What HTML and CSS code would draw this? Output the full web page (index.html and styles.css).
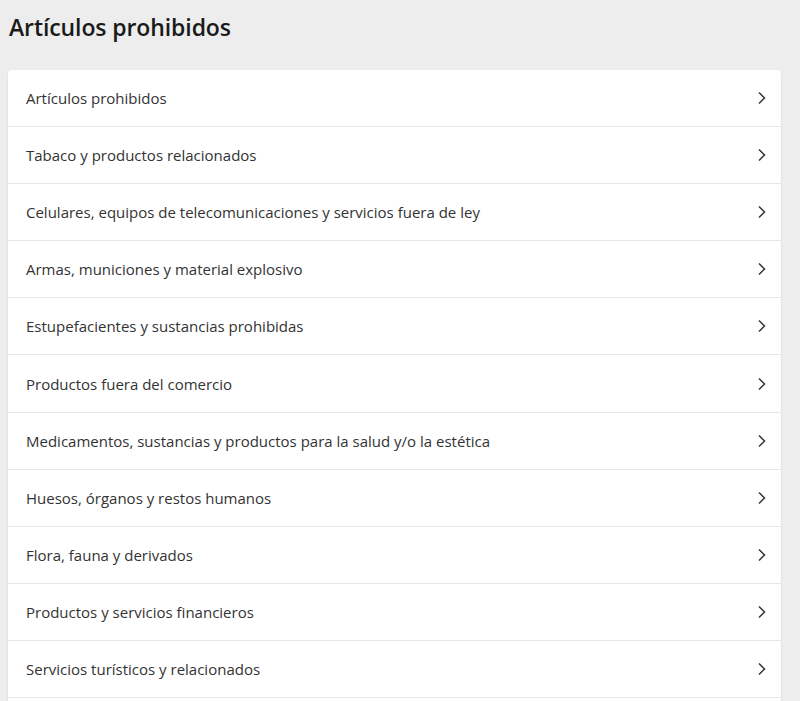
FILE: index.html
```html
<!DOCTYPE html>
<html lang="es">
<head>
    <meta charset="UTF-8">
    <meta name="viewport" content="width=device-width, initial-scale=1.0">
    <title>Artículos prohibidos</title>
    <link rel="stylesheet" href="styles.css">
</head>
<body>

<h1 class="title">Artículos prohibidos</h1>

<ul class="list">
    <li class="item"><a href="#">Artículos prohibidos<svg class="chevron" viewBox="0 0 10 14"><path d="M2 1.5 L7.5 7 L2 12.5"/></svg></a></li>
    <li class="item"><a href="#">Tabaco y productos relacionados<svg class="chevron" viewBox="0 0 10 14"><path d="M2 1.5 L7.5 7 L2 12.5"/></svg></a></li>
    <li class="item"><a href="#">Celulares, equipos de telecomunicaciones y servicios fuera de ley<svg class="chevron" viewBox="0 0 10 14"><path d="M2 1.5 L7.5 7 L2 12.5"/></svg></a></li>
    <li class="item"><a href="#">Armas, municiones y material explosivo<svg class="chevron" viewBox="0 0 10 14"><path d="M2 1.5 L7.5 7 L2 12.5"/></svg></a></li>
    <li class="item"><a href="#">Estupefacientes y sustancias prohibidas<svg class="chevron" viewBox="0 0 10 14"><path d="M2 1.5 L7.5 7 L2 12.5"/></svg></a></li>
    <li class="item"><a href="#">Productos fuera del comercio<svg class="chevron" viewBox="0 0 10 14"><path d="M2 1.5 L7.5 7 L2 12.5"/></svg></a></li>
    <li class="item"><a href="#">Medicamentos, sustancias y productos para la salud y/o la estética<svg class="chevron" viewBox="0 0 10 14"><path d="M2 1.5 L7.5 7 L2 12.5"/></svg></a></li>
    <li class="item"><a href="#">Huesos, órganos y restos humanos<svg class="chevron" viewBox="0 0 10 14"><path d="M2 1.5 L7.5 7 L2 12.5"/></svg></a></li>
    <li class="item"><a href="#">Flora, fauna y derivados<svg class="chevron" viewBox="0 0 10 14"><path d="M2 1.5 L7.5 7 L2 12.5"/></svg></a></li>
    <li class="item"><a href="#">Productos y servicios financieros<svg class="chevron" viewBox="0 0 10 14"><path d="M2 1.5 L7.5 7 L2 12.5"/></svg></a></li>
    <li class="item"><a href="#">Servicios turísticos y relacionados<svg class="chevron" viewBox="0 0 10 14"><path d="M2 1.5 L7.5 7 L2 12.5"/></svg></a></li>
</ul>

</body>
</html>
```

FILE: styles.css
```css
body {
    margin: 0;
    padding: 0 19px 0 8px;
    background-color: #ededed;
    font-family: "Open Sans", "Noto Sans", sans-serif;
    color: #333;
}
.title {
    margin: 0;
    padding: 13px 0 0 1px;
    height: 70px;
    box-sizing: border-box;
    font-size: 23px;
    line-height: 28px;
    font-weight: 600;
    color: #1a1a1a;
    letter-spacing: -0.1px;
}
.list {
    list-style: none;
    margin: 0;
    padding: 0 0 10px;
    background-color: white;
    border-radius: 4px;
    box-shadow: 0 1px 2px rgba(0, 0, 0, 0.12);
}
.item {
    border-bottom: 1px solid #e6e6e6;
}
.item a {
    display: flex;
    align-items: center;
    justify-content: space-between;
    height: 56.1px;
    padding: 0 14px 0 18px;
    font-size: 15px;
    color: #333;
    text-decoration: none;
}
.chevron {
    width: 10px;
    height: 14px;
    fill: none;
    stroke: #333;
    stroke-width: 1.5;
}
```
